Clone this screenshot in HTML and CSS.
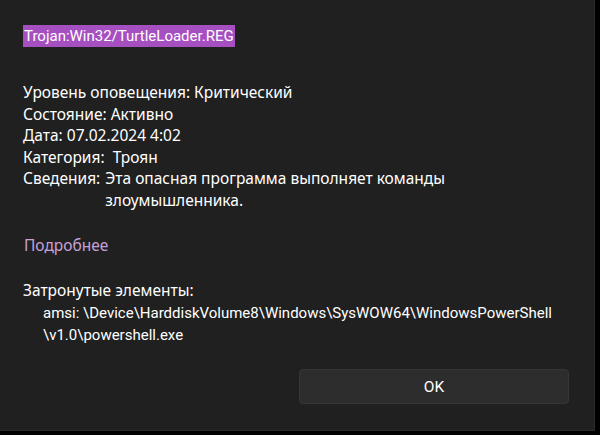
FILE: index.html
```html
<!DOCTYPE html>
<html lang="ru">
<head>
<meta charset="utf-8">
<link rel="stylesheet" href="styles.css">
</head>
<body>
<div class="dialog">
  <div class="content">
    <div class="title"><span class="threat latin">Trojan:Win32/TurtleLoader.REG</span></div>
    <div class="info">
      <div class="line">Уровень оповещения: Критический</div>
      <div class="line">Состояние: Активно</div>
      <div class="line">Дата: 07.02.2024 4:02</div>
      <div class="line">Категория:&nbsp; Троян</div>
      <div class="row">
        <span class="label">Сведения:</span>
        <span class="value">Эта опасная программа выполняет команды злоумышленника.</span>
      </div>
    </div>
    <div class="more">Подробнее</div>
    <div class="affected">
      <div class="line">Затронутые элементы:</div>
      <div class="path latin">amsi: \Device\HarddiskVolume8\Windows\SysWOW64\WindowsPowerShell<br>\v1.0\powershell.exe</div>
    </div>
  </div>
  <div class="footer">
    <button class="ok latin">OK</button>
  </div>
</div>
</body>
</html>
```

FILE: styles.css
```css
html, body {
  margin: 0;
  padding: 0;
  background: #000;
}
body {
  width: 600px;
  height: 435px;
  overflow: hidden;
  font-family: "Noto Sans", "Open Sans", sans-serif;
  font-size: 15.5px;
  color: #ffffff;
}
.latin {
  font-family: Roboto, "Noto Sans", sans-serif;
  font-size: 15px;
}
.dialog {
  box-sizing: border-box;
  width: 595px;
  height: 431px;
  background: #202020;
  border-right: 1px solid #2c2c2c;
  border-bottom: 1px solid #2c2c2c;
  display: flex;
  flex-direction: column;
}
.content {
  padding: 24px 0 0 23px;
  line-height: 21.6px;
}
.title {
  height: 22px;
  line-height: 22px;
}
.threat {
  background: #a64fc0;
  color: #fff;
  padding: 0 1px;
  display: inline-block;
}
.info {
  margin-top: 36px;
}
.row {
  display: flex;
  gap: 5px;
}
.value {
  width: 380px;
}
.more {
  margin-top: 23px;
  margin-left: 1px;
  color: #c8a0d8;
}
.affected {
  margin-top: 24px;
}
.path {
  padding-left: 20px;
  line-height: 22.5px;
}
.footer {
  margin-top: auto;
  display: flex;
  justify-content: flex-end;
  padding: 0 25px 26px 0;
}
.ok {
  width: 270px;
  height: 35px;
  background: #2d2d2d;
  border: 1px solid #363636;
  border-radius: 4px;
  color: #ffffff;
  font-size: 15.5px;
}
```
